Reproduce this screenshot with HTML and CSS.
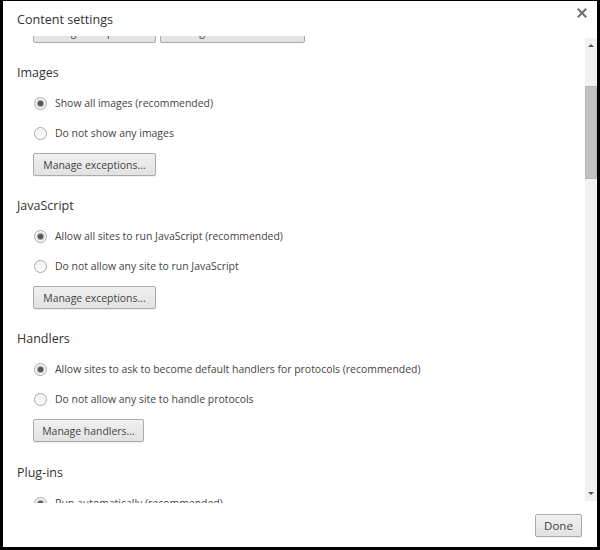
FILE: index.html
```html
<!DOCTYPE html>
<html>
<head>
<meta charset="utf-8">
<link rel="stylesheet" href="styles.css">
</head>
<body>
<div class="dialog">
  <div class="header">
    <h1 class="title">Content settings</h1>
    <svg class="close" width="10" height="10" viewBox="0 0 10 10"><path d="M1.5 1.5 L8.5 8.5 M8.5 1.5 L1.5 8.5" stroke="#6f6f6f" stroke-width="2" stroke-linecap="square"/></svg>
  </div>
  <div class="scroll">
    <div class="content">
      <div class="toprow">
        <button class="btn w122">Manage exceptions...</button>
        <button class="btn w144">Manage individual data...</button>
      </div>

      <section class="sec">
        <h2 class="heading">Images</h2>
        <label class="row"><span class="radio on"></span>Show all images (recommended)</label>
        <label class="row"><span class="radio"></span>Do not show any images</label>
        <button class="btn w122">Manage exceptions...</button>
      </section>

      <section class="sec">
        <h2 class="heading">JavaScript</h2>
        <label class="row"><span class="radio on"></span>Allow all sites to run JavaScript (recommended)</label>
        <label class="row"><span class="radio"></span>Do not allow any site to run JavaScript</label>
        <button class="btn w122">Manage exceptions...</button>
      </section>

      <section class="sec">
        <h2 class="heading">Handlers</h2>
        <label class="row"><span class="radio on"></span>Allow sites to ask to become default handlers for protocols (recommended)</label>
        <label class="row"><span class="radio"></span>Do not allow any site to handle protocols</label>
        <button class="btn w110">Manage handlers...</button>
      </section>

      <section class="sec last">
        <h2 class="heading">Plug-ins</h2>
        <label class="row"><span class="radio on"></span>Run automatically (recommended)</label>
        <label class="row"><span class="radio"></span>Click to play</label>
      </section>
    </div>
    <div class="scrollbar">
      <span class="arrow up"></span>
      <div class="track"><div class="thumb"></div></div>
      <span class="arrow down"></span>
    </div>
  </div>
  <div class="footer">
    <button class="btn done">Done</button>
  </div>
</div>
</body>
</html>
```

FILE: styles.css
```css
html, body {
  margin: 0;
  padding: 0;
  background: #000;
  width: 600px;
  height: 550px;
  overflow: hidden;
}
.dialog {
  margin: 1px 3px 3px 3px;
  width: 594px;
  height: 546px;
  background: #fff;
  display: flex;
  flex-direction: column;
  font-family: "Open Sans", "Noto Sans", sans-serif;
  color: #333;
}
.header {
  height: 35px;
  display: flex;
  justify-content: space-between;
  align-items: flex-start;
  flex: none;
}
.title {
  margin: 9px 0 0 14px;
  font-size: 12.6px;
  font-weight: 400;
  line-height: 20px;
  color: #333;
}
.close {
  margin: 7px 10px 0 0;
}
.scroll {
  flex: none;
  height: 467px;
  display: flex;
  overflow: hidden;
}
.content {
  flex: 1;
  overflow: hidden;
  padding-left: 14px;
}
.toprow {
  display: flex;
  align-items: flex-end;
  gap: 4px;
  height: 7px;
  overflow: hidden;
  margin-left: 16px;
}
.sec {
  display: flex;
  flex-direction: column;
  align-items: flex-start;
  padding-top: 20px;
}
.sec.last {
  padding-top: 21px;
}
.heading {
  margin: 0 0 5px 0;
  font-size: 12.5px;
  font-weight: 400;
  line-height: 20px;
  color: #333;
}
.row {
  display: flex;
  align-items: center;
  height: 30px;
  padding-left: 17px;
  font-size: 10.45px;
  color: #444;
  white-space: nowrap;
}
.radio {
  flex: none;
  width: 11px;
  height: 11px;
  border: 1px solid #a9a9a9;
  border-radius: 50%;
  background: linear-gradient(#eeeeee, #fdfdfd);
  margin-right: 8px;
  display: flex;
  align-items: center;
  justify-content: center;
  box-shadow: inset 0 0 0 1px #fafafa;
}
.radio.on::after {
  content: "";
  width: 5px;
  height: 5px;
  border-radius: 50%;
  background: #555;
  box-shadow: 0 0 1px 1px #9a9a9a;
}
.btn {
  font-family: "Open Sans", "Noto Sans", sans-serif;
  font-size: 10.45px;
  color: #444;
  height: 23px;
  padding: 0;
  border: 1px solid #aaaaaa;
  border-radius: 2px;
  background: linear-gradient(#f0f0f0, #e2e2e2);
  box-shadow: 0 1px 0 rgba(0,0,0,0.06);
  line-height: 20px;
  white-space: nowrap;
  overflow: hidden;
  box-sizing: border-box;
  flex: none;
}
.sec .btn {
  margin: 5px 0 0 16px;
}
.w122 { width: 123px; }
.w144 { width: 145px; }
.w110 { width: 111px; }
.scrollbar {
  flex: none;
  width: 12px;
  margin: 2px 0 2px 0;
  background: #f1f1f1;
  display: flex;
  flex-direction: column;
  align-items: center;
}
.arrow {
  flex: none;
  width: 0;
  height: 0;
  border-left: 3px solid transparent;
  border-right: 3px solid transparent;
  margin: 6px 0;
}
.arrow.up { border-bottom: 3px solid #555; }
.arrow.down { border-top: 3px solid #555; }
.track {
  flex: 1;
  width: 100%;
}
.thumb {
  margin-top: 33px;
  height: 93px;
  background: #c1c1c1;
  border: 1px solid #b4b4b4;
  box-sizing: border-box;
}
.footer {
  flex: 1;
  display: flex;
  justify-content: flex-end;
  align-items: flex-start;
  padding: 11px 15px 0 0;
}
.done {
  width: 47px;
  height: 23px;
  font-size: 11.5px;
}
```
